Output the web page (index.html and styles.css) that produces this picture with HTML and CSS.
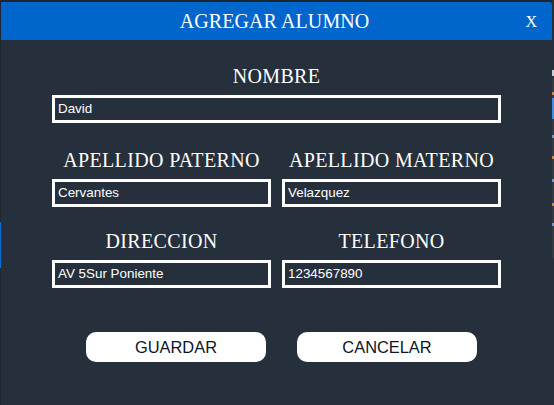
FILE: index.html
```html
<!DOCTYPE html>
<html lang="es">
<head>
<meta charset="utf-8">
<title>Agregar alumno</title>
<link rel="stylesheet" href="styles.css">
</head>
<body>
<div class="desk">
  <div class="edge-left"><span class="edge-left__mark"></span></div>
  <div class="window">
    <header class="titlebar">
      <h1 class="titlebar__title">AGREGAR ALUMNO</h1>
      <span class="titlebar__close">X</span>
    </header>
    <main class="form">
      <div class="field">
        <div class="field__label">NOMBRE</div>
        <div class="field__box">David</div>
      </div>
      <div class="row row--second">
        <div class="field">
          <div class="field__label">APELLIDO PATERNO</div>
          <div class="field__box">Cervantes</div>
        </div>
        <div class="field">
          <div class="field__label">APELLIDO MATERNO</div>
          <div class="field__box">Velazquez</div>
        </div>
      </div>
      <div class="row row--third">
        <div class="field">
          <div class="field__label">DIRECCION</div>
          <div class="field__box">AV 5Sur Poniente</div>
        </div>
        <div class="field">
          <div class="field__label">TELEFONO</div>
          <div class="field__box">1234567890</div>
        </div>
      </div>
      <div class="actions">
        <button class="btn" type="button">GUARDAR</button>
        <button class="btn" type="button">CANCELAR</button>
      </div>
    </main>
  </div>
  <div class="edge-right">
    <span class="edge-right__mark edge-right__mark--text"></span>
    <div class="edge-right__panel">
      <span class="edge-right__dot edge-right__dot--a"></span>
      <span class="edge-right__sel"></span>
      <span class="edge-right__dot edge-right__dot--b"></span>
      <span class="edge-right__dot edge-right__dot--c"></span>
      <span class="edge-right__dot edge-right__dot--d"></span>
      <span class="edge-right__dot edge-right__dot--e"></span>
      <span class="edge-right__dot edge-right__dot--f"></span>
    </div>
  </div>
</div>
</body>
</html>
```

FILE: styles.css
```css
* { box-sizing: border-box; }
html, body { margin: 0; padding: 0; }
body {
  background: #1f252e;
  width: 554px;
  height: 405px;
  overflow: hidden;
}
.desk {
  display: flex;
  height: 405px;
}
.edge-left {
  width: 1px;
  flex: none;
  padding-top: 222px;
  background: #1f252e;
}
.edge-left__mark {
  display: block;
  width: 1px;
  height: 46px;
  background: #0a6fd6;
}
.window {
  width: 551px;
  flex: none;
  margin-top: 2px;
  background: #262f3c;
  color: #ffffff;
}
.titlebar {
  position: relative;
  height: 38px;
  background: #0066cc;
  border-top-right-radius: 3px;
}
.titlebar__title {
  margin: 0;
  padding-right: 4px;
  font: normal 20px/38px "Liberation Serif", "Times New Roman", serif;
  letter-spacing: 0.1px;
  text-align: center;
  color: #ffffff;
}
.titlebar__close {
  position: absolute;
  right: 15px;
  top: 0;
  font: normal 16px/40px "Liberation Serif", "Times New Roman", serif;
  color: #ffffff;
}
.form {
  width: 449px;
  margin: 0 auto;
  padding-top: 24px;
}
.row {
  display: grid;
  grid-template-columns: 219px 219px;
  column-gap: 11px;
}
.row--second { margin-top: 25px; }
.row--third { margin-top: 22px; }
.field__label {
  font: normal 20px/24px "Liberation Serif", "Times New Roman", serif;
  letter-spacing: 0.35px;
  text-align: center;
  color: #ffffff;
  margin-bottom: 7px;
}
.field__box {
  height: 28px;
  border: 3px solid #ffffff;
  padding: 0 3px;
  font: 13.4px/22px "Liberation Sans", Arial, sans-serif;
  color: #ffffff;
  white-space: nowrap;
}
.actions {
  display: flex;
  gap: 31px;
  margin-top: 44px;
  padding-left: 34px;
}
.btn {
  width: 180px;
  height: 30px;
  border: none;
  border-radius: 10px;
  background: #ffffff;
  color: #0b1626;
  font: 16.4px/30px "Liberation Sans", Arial, sans-serif;
  padding: 0;
}
.edge-right {
  width: 2px;
  flex: none;
  padding-top: 70px;
  background: #262f3c;
}
.edge-right__mark--text {
  display: block;
  height: 6px;
  background: #c9ccd2;
}
.edge-right__panel {
  margin-top: 2px;
  height: 180px;
  background: #343a44;
  padding-top: 14px;
  display: flex;
  flex-direction: column;
}
.edge-right__dot {
  display: block;
  height: 3px;
  background: #c48a4a;
}
.edge-right__dot--a { margin-bottom: 3px; }
.edge-right__sel {
  display: block;
  height: 21px;
  background: #3d8fe6;
}
.edge-right__dot--b { margin-top: 16px; background: #6d9bd0; }
.edge-right__dot--c { margin-top: 18px; }
.edge-right__dot--d { margin-top: 20px; background: #6d9bd0; }
.edge-right__dot--e { margin-top: 21px; }
.edge-right__dot--f { margin-top: 17px; background: #6d9bd0; }
```
